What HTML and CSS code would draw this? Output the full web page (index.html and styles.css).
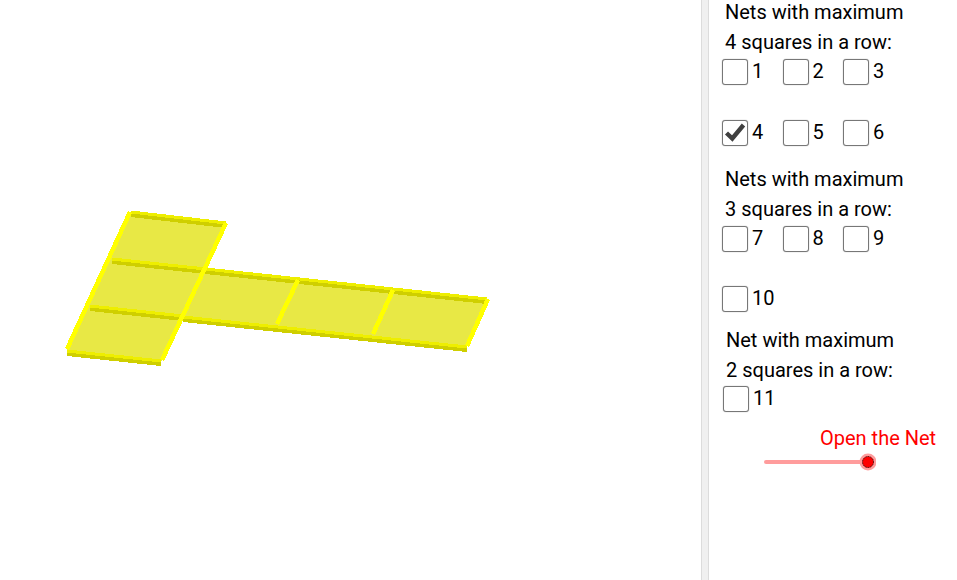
FILE: index.html
```html
<!DOCTYPE html>
<html>
<head>
	<title>Nets of a Cube</title>
	<link rel="stylesheet" href="styles.css">
</head>
<body>
	<div class="app">
		<div class="view">
			<svg class="net" width="701" height="580" viewBox="0 0 701 580" shape-rendering="crispEdges">
				<!-- faces -->
				<polygon class="face" points="130,212 226,223 162,361 67,350"/>
				<polygon class="face" points="205,269 488,299 467,347 183,317"/>
				<!-- shaded side of the edges running left to right -->
				<g class="shade">
					<line x1="131" y1="215" x2="226" y2="226"/>
					<line x1="112" y1="262" x2="487" y2="302"/>
					<line x1="90" y1="309" x2="183" y2="319"/>
					<line x1="183" y1="320" x2="467" y2="350"/>
					<line x1="67" y1="354" x2="161" y2="364"/>
				</g>
				<g class="edge-thin">
					<line x1="131" y1="212" x2="226" y2="223"/>
					<line x1="112" y1="259" x2="487" y2="299"/>
					<line x1="90" y1="306" x2="183" y2="316"/>
					<line x1="183" y1="317" x2="467" y2="347"/>
					<line x1="67" y1="351" x2="161" y2="361"/>
				</g>
				<!-- edges running front to back -->
				<g class="edge">
					<line x1="130" y1="212" x2="67" y2="349"/>
					<line x1="226" y1="223" x2="162" y2="360"/>
					<line x1="298" y1="280" x2="277" y2="324"/>
					<line x1="393" y1="290" x2="373" y2="334"/>
					<line x1="488" y1="299" x2="467" y2="346"/>
				</g>
			</svg>
		</div>
		<div class="divider"></div>
		<div class="panel">
			<div class="title">Nets with maximum</div>
			<div class="title">4 squares in a row:</div>
			<div class="row row-first">
				<div class="item"><span class="box"></span>1</div>
				<div class="item"><span class="box"></span>2</div>
				<div class="item"><span class="box"></span>3</div>
			</div>
			<div class="row row-next">
				<div class="item">
					<span class="box">
						<svg width="24" height="24" viewBox="0 0 24 24"><path d="M3.5 12 L9.3 17.5 L20.5 4" fill="none" stroke="#404040" stroke-width="4.4"/></svg>
					</span>4
				</div>
				<div class="item"><span class="box"></span>5</div>
				<div class="item"><span class="box"></span>6</div>
			</div>
			<div class="title title-gap">Nets with maximum</div>
			<div class="title">3 squares in a row:</div>
			<div class="row row-first">
				<div class="item"><span class="box"></span>7</div>
				<div class="item"><span class="box"></span>8</div>
				<div class="item"><span class="box"></span>9</div>
			</div>
			<div class="row row-ten">
				<div class="item"><span class="box"></span>10</div>
			</div>
			<div class="title title-shift title-gap2">Net with maximum</div>
			<div class="title title-shift">2 squares in a row:</div>
			<div class="row row-eleven">
				<div class="item"><span class="box"></span>11</div>
			</div>
			<div class="slider-label">Open the Net</div>
			<svg class="slider" width="112" height="22" viewBox="0 0 112 22">
				<line x1="2" y1="11" x2="104" y2="11" stroke="#ff9c9c" stroke-width="4" stroke-linecap="round"/>
				<circle cx="104" cy="11" r="8.5" fill="#ff9c9c"/>
				<circle cx="104" cy="11" r="5.5" fill="#ff0000" stroke="#400000" stroke-width="1" stroke-dasharray="1.2 0.6"/>
			</svg>
		</div>
	</div>
</body>
</html>
```

FILE: styles.css
```css
body {
	margin: 0;
	padding: 0;
	background-color: white;
	font-family: Roboto, sans-serif;
	font-size: 20px;
	color: black;
	overflow: hidden;
}

.app {
	display: flex;
	width: 957px;
	height: 580px;
	overflow: hidden;
}

.view {
	width: 701px;
	flex-shrink: 0;
}

.net {
	display: block;
}

.face {
	fill: #e8e845;
}

.shade line {
	stroke: #cfcf00;
	stroke-width: 4;
}

.edge-thin line {
	stroke: #eeee00;
	stroke-width: 3;
}

.edge line {
	stroke: #ffff00;
	stroke-width: 4.5;
}

.divider {
	width: 6px;
	flex-shrink: 0;
	background-color: #f0f0f0;
	border-left: 1px solid #dcdcdc;
	border-right: 1px solid #dcdcdc;
}

.panel {
	flex: 1;
	margin-top: -3px;
	padding-left: 13px;
	display: flex;
	flex-direction: column;
	align-items: flex-start;
}

.title {
	height: 30px;
	line-height: 30px;
	margin-left: 3px;
	white-space: nowrap;
}

.title-shift {
	margin-left: 4px;
}

.title-gap {
	margin-top: 18px;
}

.title-gap2 {
	margin-top: 13px;
}

.row {
	display: flex;
	height: 27px;
}

.row-first {
	margin-top: 1px;
}

.row-next {
	margin-top: 34px;
}

.row-ten {
	margin-top: 33px;
}

.row-eleven {
	margin-top: 0;
	margin-left: 1px;
}

.item {
	width: 60.5px;
	display: flex;
	align-items: center;
	gap: 4px;
	line-height: 27px;
}

.box {
	width: 24px;
	height: 24px;
	border: 1px solid #777777;
	border-radius: 3px;
	box-shadow: 0 0 1px #888888;
	background-color: white;
	flex-shrink: 0;
}

.box svg {
	display: block;
}

.slider-label {
	margin-top: 11px;
	margin-left: 98px;
	height: 28px;
	line-height: 30px;
	color: #ff0000;
	white-space: nowrap;
}

.slider {
	display: block;
	margin-left: 42px;
}
```
